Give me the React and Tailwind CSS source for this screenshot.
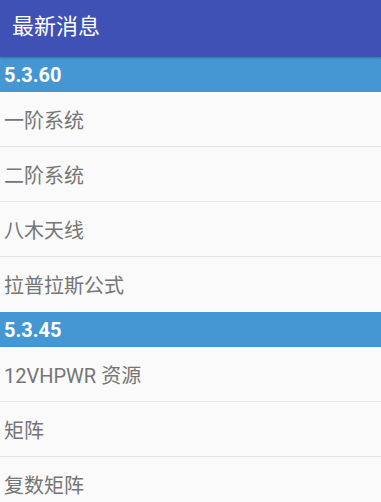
export default function App() {
  const sections = [
    { v: "5.3.60", items: ["一阶系统", "二阶系统", "八木天线", "拉普拉斯公式"] },
    { v: "5.3.45", items: ["12VHPWR 资源", "矩阵", "复数矩阵"] },
  ];
  const font = { fontFamily: 'Roboto, "Noto Sans CJK SC", sans-serif' };
  return (
    <div className="w-[381px] h-[502px] overflow-hidden bg-[#fafafa]" style={font}>
      <div className="h-[57px] bg-[#3f51b5] flex items-center pl-[12px] pb-[4px] text-white text-[22px] shadow-[0_1px_2px_rgba(0,0,0,0.25)] relative z-10">
        最新消息
      </div>
      {sections.map((s) => (
        <div key={s.v}>
          <div className="h-[35px] bg-[#4497d3] flex items-center pl-[4px] text-white text-[20px] font-bold">
            {s.v}
          </div>
          {s.items.map((it, i) => (
            <div
              key={it}
              className={
                "h-[55px] flex items-center pl-[4px] pt-[3px] text-[#757575] text-[20px] " +
                (i < s.items.length - 1 ? "border-b border-[#e4e4e4]" : "")
              }
            >
              {it}
            </div>
          ))}
        </div>
      ))}
    </div>
  );
}
